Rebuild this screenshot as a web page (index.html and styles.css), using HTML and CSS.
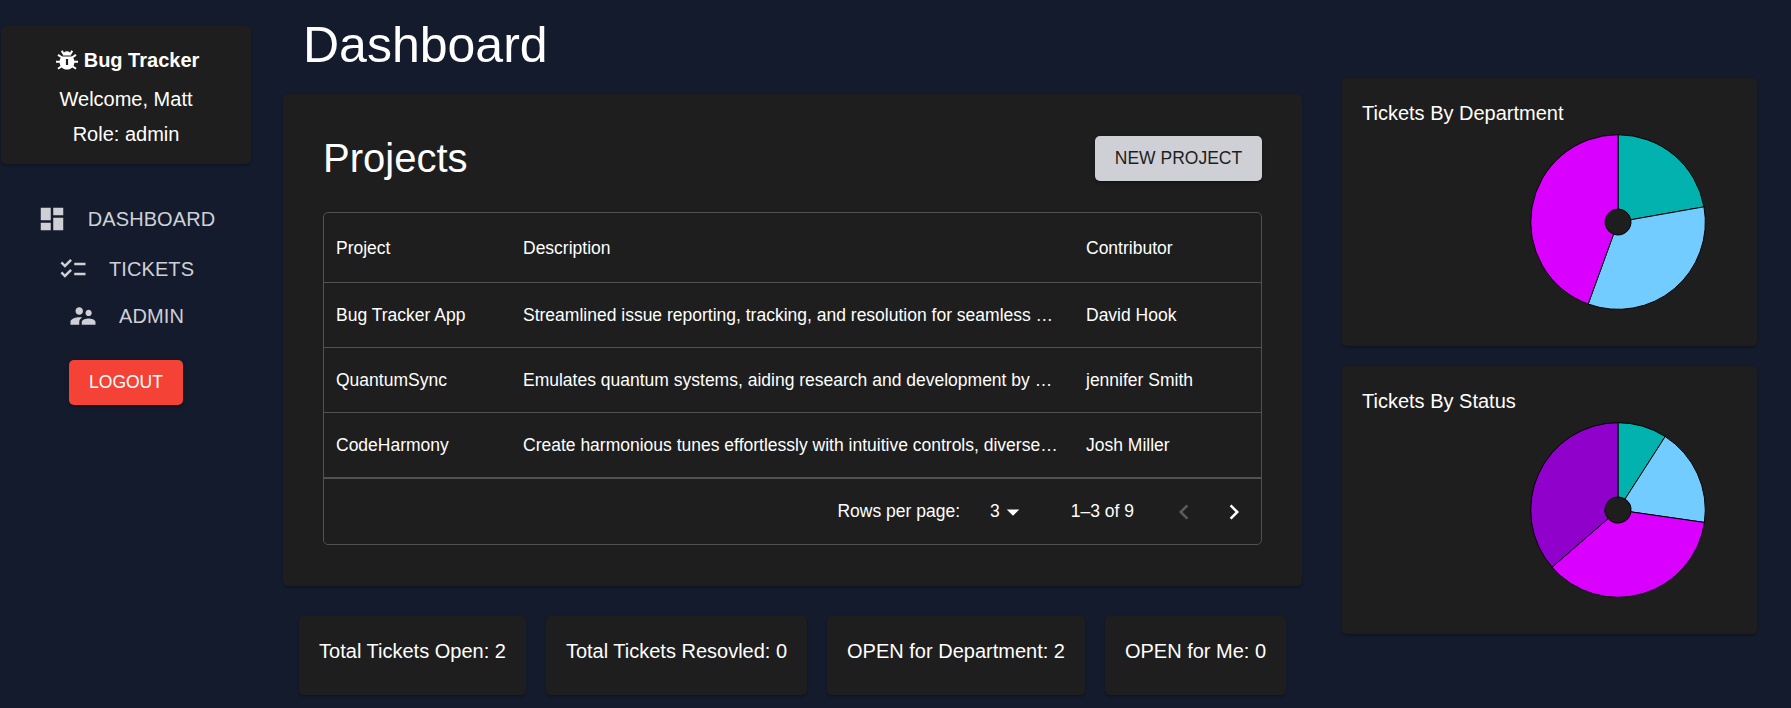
FILE: index.html
```html
<!DOCTYPE html>
<html lang="en">
<head>
  <meta charset="UTF-8">
  <meta name="viewport" content="width=device-width, initial-scale=1.0">
  <title>Bug Tracker</title>
  <link rel="stylesheet" href="styles.css">
</head>
<body>
  <div class="app">
    <aside class="sidebar">
      <div class="paper brand-card">
        <div class="brand">
          <svg class="bug-icon" viewBox="0 0 24 24"><path fill="#fff" d="M7.800 7.400C8.200 4.600 9.800 3.200 12 3.200s3.800 1.400 4.200 4.200zM6.700 8.600h10.600c1.400 1.400 2.100 3.200 2.100 5.400 0 4.400-3 7.600-7.400 7.600s-7.400-3.200-7.400-7.600c0-2.200.7-4 2.100-5.400zM10.900 11v6h2.200v-6z"/><path stroke="#fff" stroke-width="2" fill="none" d="M8.500 6 6.800 2.800M15.500 6l1.700-3.200M7 9.500 3 6.800M17 9.500l4-2.700M6 13.800H1M18 13.800h5M7 18l-4 2.800M17 18l4 2.800"/></svg>
          <span>Bug Tracker</span>
        </div>
        <div class="brand-line">Welcome, Matt</div>
        <div class="brand-line">Role: admin</div>
      </div>
      <nav class="nav">
        <a class="nav-item nav-dashboard">
          <svg class="nav-icon" viewBox="0 0 24 24"><path d="M3 13h8V3H3v10zm0 8h8v-6H3v6zm10 0h8V11h-8v10zm0-18v6h8V3h-8z"/></svg>
          <span>DASHBOARD</span>
        </a>
        <a class="nav-item nav-tickets">
          <svg class="nav-icon" viewBox="0 0 24 24"><path d="M22 7h-9v2h9V7zm0 8h-9v2h9v-2zM5.540 11 2 7.460l1.410-1.410 2.120 2.120 4.240-4.240 1.410 1.410L5.540 11zm0 8L2 15.460l1.410-1.410 2.120 2.120 4.240-4.240 1.410 1.410L5.540 19z"/></svg>
          <span>TICKETS</span>
        </a>
        <a class="nav-item nav-admin">
          <svg class="nav-icon" viewBox="0 0 24 24"><path d="M16.500 12c1.380 0 2.490-1.120 2.490-2.500S17.880 7 16.500 7C15.120 7 14 8.120 14 9.500s1.120 2.500 2.500 2.500zM9 11c1.660 0 2.990-1.340 2.990-3S10.660 5 9 5C7.340 5 6 6.340 6 8s1.340 3 3 3zm7.500 3c-1.830 0-5.500.92-5.500 2.750V19h11v-2.250c0-1.830-3.670-2.750-5.500-2.750zM9 13c-2.330 0-7 1.170-7 3.500V19h7v-2.250c0-.85.33-2.340 2.370-3.470C10.500 13.100 9.660 13 9 13z"/></svg>
          <span>ADMIN</span>
        </a>
      </nav>
      <button class="btn btn-logout">LOGOUT</button>
    </aside>

    <main class="main">
      <h1 class="page-title">Dashboard</h1>
      <section class="paper projects">
        <div class="projects-head">
          <h2>Projects</h2>
          <button class="btn btn-new">NEW PROJECT</button>
        </div>
        <div class="grid">
          <div class="row row-head">
            <div class="cell col-project">Project</div>
            <div class="cell col-desc">Description</div>
            <div class="cell col-contrib">Contributor</div>
          </div>
          <div class="row">
            <div class="cell col-project">Bug Tracker App</div>
            <div class="cell col-desc">Streamlined issue reporting, tracking, and resolution for seamless …</div>
            <div class="cell col-contrib">David Hook</div>
          </div>
          <div class="row">
            <div class="cell col-project">QuantumSync</div>
            <div class="cell col-desc">Emulates quantum systems, aiding research and development by …</div>
            <div class="cell col-contrib">jennifer Smith</div>
          </div>
          <div class="row row-last">
            <div class="cell col-project">CodeHarmony</div>
            <div class="cell col-desc">Create harmonious tunes effortlessly with intuitive controls, diverse…</div>
            <div class="cell col-contrib">Josh Miller</div>
          </div>
          <div class="pager">
            <span>Rows per page:</span>
            <span class="pager-select">3
              <svg class="caret" viewBox="0 0 24 24"><path d="m7 10 5 5 5-5z"/></svg>
            </span>
            <span class="pager-count">1–3 of 9</span>
            <svg class="pager-arrow prev" viewBox="0 0 24 24"><path d="M15.410 7.410 14 6l-6 6 6 6 1.410-1.410L10.830 12z"/></svg>
            <svg class="pager-arrow" viewBox="0 0 24 24"><path d="M10 6 8.590 7.410 13.170 12l-4.580 4.590L10 18l6-6z"/></svg>
          </div>
        </div>
      </section>
      <div class="stats">
        <div class="paper stat stat-open">Total Tickets Open: 2</div>
        <div class="paper stat stat-resolved">Total Tickets Resovled: 0</div>
        <div class="paper stat stat-dept">OPEN for Department: 2</div>
        <div class="paper stat stat-me">OPEN for Me: 0</div>
      </div>
    </main>

    <aside class="charts">
      <div class="paper chart-card">
        <h3>Tickets By Department</h3>
        <svg class="pie" viewBox="0 0 176 176" id="deptPie" data-values="2,3,4" data-colors="#02b2af,#72ccff,#da00ff"></svg>
      </div>
      <div class="paper chart-card">
        <h3>Tickets By Status</h3>
        <svg class="pie" viewBox="0 0 176 176" id="statusPie" data-values="1,2,4,4" data-colors="#02b2af,#72ccff,#da00ff,#9001cb"></svg>
      </div>
    </aside>
  </div>

  <script src="pie.js"></script>
</body>
</html>
```

FILE: styles.css
```css
* {
  box-sizing: border-box;
}

html, body {
  height: 100%;
}

body {
  margin: 0;
  background-color: #141b2d;
  color: #fff;
  font-family: "Liberation Sans", Arial, sans-serif;
  overflow: hidden;
}

h1, h2, h3 {
  margin: 0;
  font-weight: 400;
}

.app {
  display: flex;
  align-items: flex-start;
}

.paper {
  background-color: #1e1e1e;
  border-radius: 5px;
  box-shadow: 0 2px 2px -1px rgba(0, 0, 0, 0.2), 0 1px 3px 0 rgba(0, 0, 0, 0.14);
}

/* sidebar */
.sidebar {
  width: 283px;
  flex-shrink: 0;
  padding: 26px 32px 0 1px;
  display: flex;
  flex-direction: column;
  align-items: center;
}

.brand-card {
  width: 250px;
  height: 138px;
  padding-top: 20px;
  text-align: center;
  font-size: 20px;
}

.brand {
  display: flex;
  justify-content: center;
  align-items: center;
  height: 28px;
  padding-left: 2px;
  font-weight: 700;
  gap: 5px;
}

.bug-icon {
  width: 24px;
  height: 24px;
}

.brand-line {
  height: 35px;
  line-height: 35px;
}

.brand + .brand-line {
  margin-top: 8px;
}

.nav {
  margin-top: 31px;
  display: flex;
  flex-direction: column;
  align-items: center;
}

.nav-item {
  display: flex;
  align-items: center;
  color: #cfd0d5;
  font-size: 20px;
  letter-spacing: 0.1px;
  gap: 21px;
  height: 48px;
}

.nav-tickets {
  height: 52px;
}

.nav-admin {
  height: 42px;
}

.nav-icon {
  width: 30px;
  height: 30px;
  fill: #cfd0d5;
}

.btn {
  border: none;
  border-radius: 5px;
  font-family: inherit;
  font-size: 17.5px;
  height: 45px;
  box-shadow: 0 3px 1px -2px rgba(0, 0, 0, 0.2), 0 2px 2px 0 rgba(0, 0, 0, 0.14), 0 1px 5px 0 rgba(0, 0, 0, 0.12);
}

.btn-logout {
  margin-top: 23px;
  width: 114px;
  background-color: #f44336;
  color: #fff;
}

/* main column */
.main {
  width: 1019px;
  flex-shrink: 0;
}

.page-title {
  font-size: 50px;
  line-height: 58px;
  margin: 16px 0 20px 20px;
}

.projects {
  height: 492px;
  padding: 42px 40px 0;
}

.projects-head {
  display: flex;
  justify-content: space-between;
  align-items: center;
  height: 76px;
  padding-bottom: 31px;
}

.projects-head h2 {
  font-size: 40px;
}

.btn-new {
  width: 167px;
  background-color: #cfd0d5;
  color: #1e1e1e;
}

.grid {
  height: 333px;
  border: 1px solid #515151;
  border-radius: 5px;
  font-size: 17.5px;
}

.row {
  display: flex;
  align-items: center;
  height: 65px;
  border-bottom: 1px solid #515151;
}

.row-head {
  height: 70px;
}

.row-last {
  height: 66px;
  border-bottom-width: 2px;
}

.cell {
  padding: 1px 12px 0;
  white-space: nowrap;
}

.col-project {
  width: 187px;
}

.col-desc {
  width: 563px;
}

.col-contrib {
  flex: 1;
}

.pager {
  display: flex;
  align-items: center;
  justify-content: flex-end;
  height: 65px;
  padding-right: 12px;
}

.pager-select {
  display: flex;
  align-items: center;
  margin-left: 30px;
}

.caret {
  width: 30px;
  height: 30px;
  margin-left: -2px;
  fill: #fff;
}

.pager-count {
  margin-left: 43px;
  margin-right: 15px;
}

.pager-arrow {
  width: 30px;
  height: 30px;
  fill: #fff;
  margin-left: 20px;
}

.pager-arrow.prev {
  fill: #5c5c5c;
}

.stats {
  display: flex;
  gap: 20px;
  margin-top: 30px;
  margin-left: 16px;
  font-size: 20px;
}

.stat {
  height: 79px;
  padding-top: 21px;
  line-height: 28px;
  text-align: center;
}

.stat-open {
  width: 227px;
}

.stat-resolved {
  width: 261px;
}

.stat-dept {
  width: 258px;
}

.stat-me {
  width: 181px;
}

/* chart column */
.charts {
  margin-left: 40px;
  margin-top: 78px;
  width: 415px;
}

.chart-card {
  position: relative;
  height: 268px;
  margin-bottom: 20px;
  padding: 21px 20px;
}

.chart-card h3 {
  font-size: 20px;
  line-height: 28px;
}

.pie {
  position: absolute;
  left: 188px;
  top: 56px;
  width: 176px;
  height: 176px;
}
```

FILE: pie.js
```js
// draws the pie charts from the data attributes on each svg
const NS = 'http://www.w3.org/2000/svg';

function point(cx, cy, r, angle) {
  const a = (angle - 90) * Math.PI / 180;
  return [cx + r * Math.cos(a), cy + r * Math.sin(a)];
}

document.querySelectorAll('.pie').forEach(function (svg) {
  const values = svg.dataset.values.split(',').map(Number);
  const colors = svg.dataset.colors.split(',');
  const total = values.reduce((a, b) => a + b, 0);
  const inner = 13, outer = 87.3, c = 88;
  let start = 0;

  values.forEach(function (value, i) {
    const end = start + value / total * 360;
    const large = end - start > 180 ? 1 : 0;
    const p1 = point(c, c, outer, start);
    const p2 = point(c, c, outer, end);
    const p3 = point(c, c, inner, end);
    const p4 = point(c, c, inner, start);
    const path = document.createElementNS(NS, 'path');
    path.setAttribute('d', `M${p1} A${outer} ${outer} 0 ${large} 1 ${p2} L${p3} A${inner} ${inner} 0 ${large} 0 ${p4} Z`);
    path.setAttribute('fill', colors[i]);
    path.setAttribute('stroke', '#000');
    path.setAttribute('stroke-width', '1');
    svg.appendChild(path);
    start = end;
  });
});
```
